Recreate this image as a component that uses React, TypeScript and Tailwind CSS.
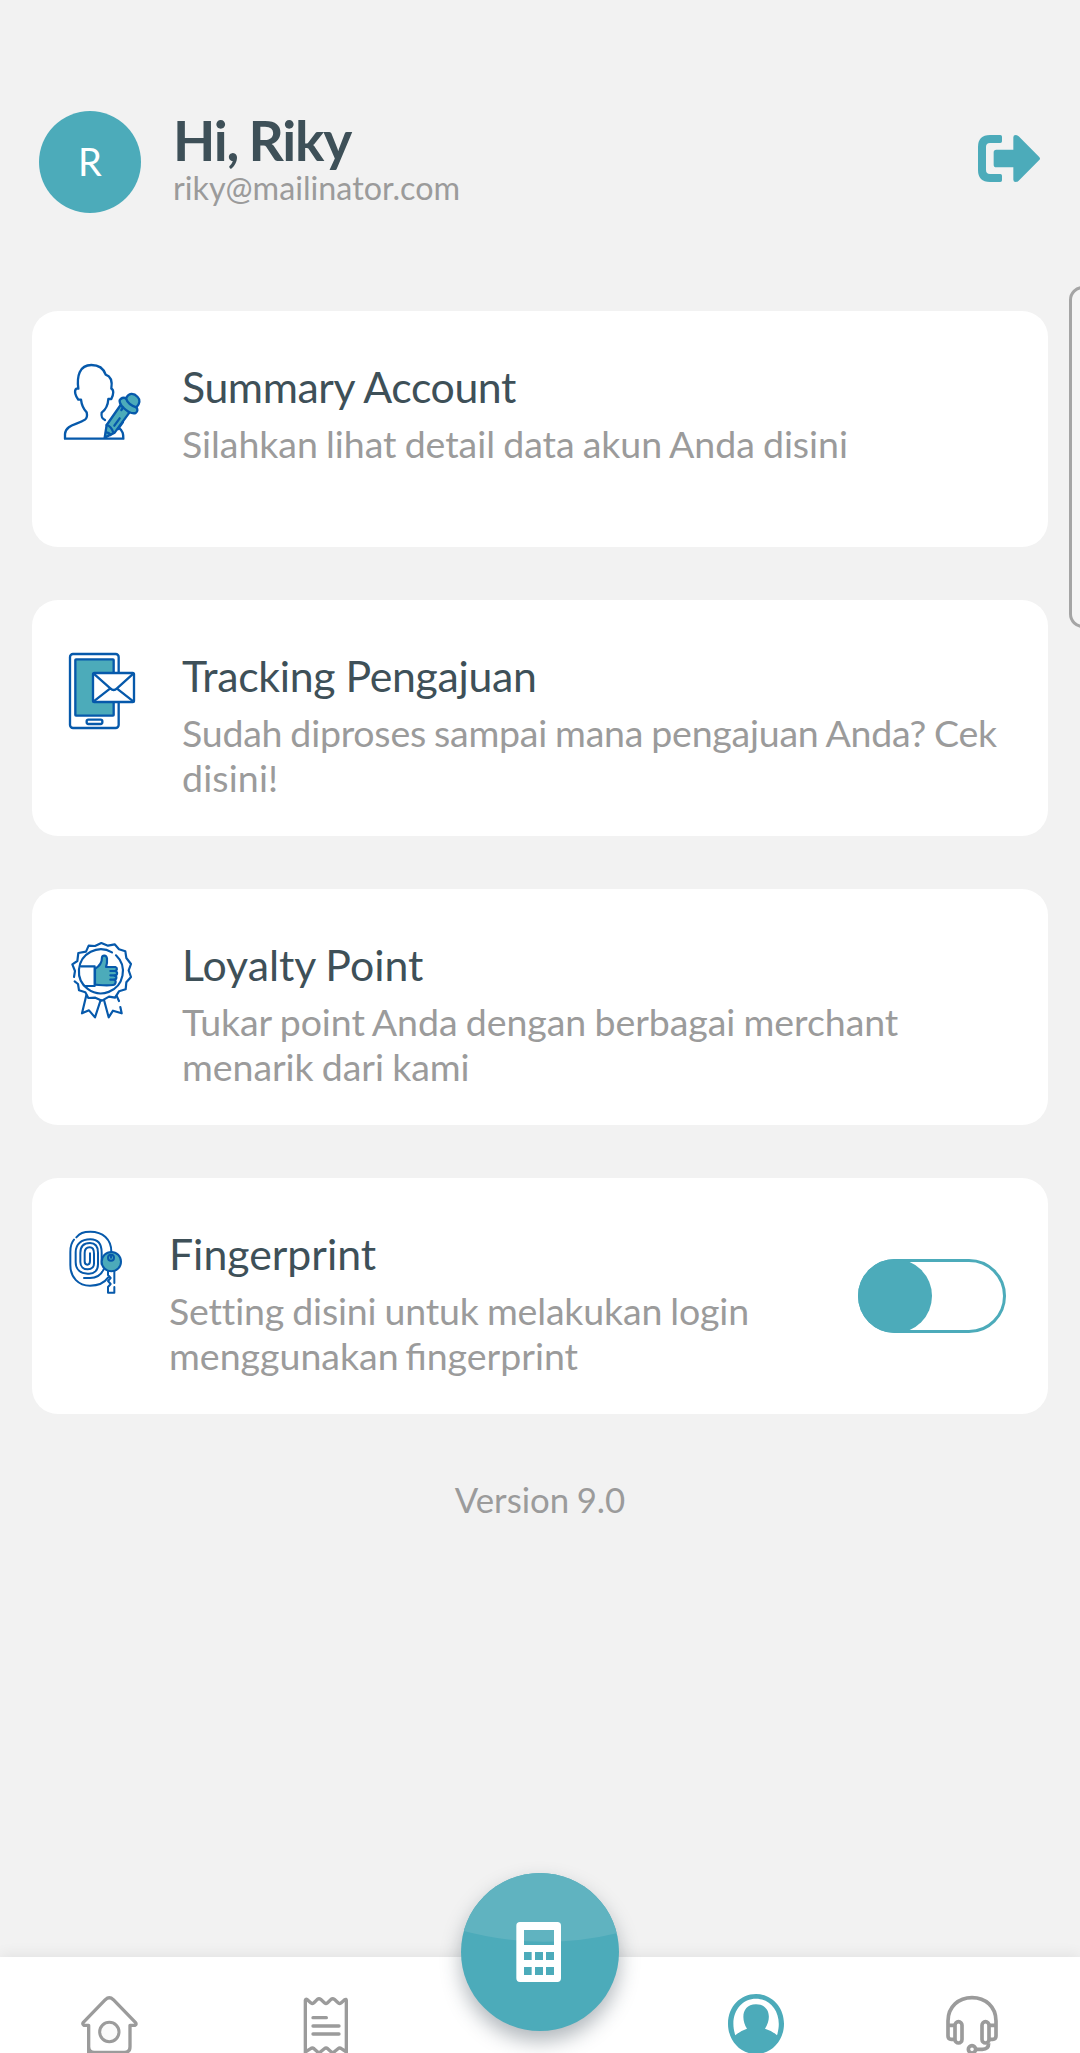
import type { ReactNode } from "react";

const NAVY = "#0659ab";
const TEAL = "#4cabba";
const GRAY = "#9b9b9b";

function AccountIcon() {
  return (
    <svg width="100" height="100" viewBox="0 3 300 300" fill="none" stroke={NAVY} strokeWidth="7" strokeLinejoin="round" strokeLinecap="round">
      <path d="M165 266H45V252C48 223 82 225 105 209C114 202 111 192 110 187C98 175 95 166 93 149H85C77 139 71 122 79 116H85C80 79 88 45 124 45C149 45 161 56 167 74C183 79 187 97 184 116C192 119 191 134 184 147H175C174 164 170 177 155 188C153 200 155 205 165 210M206 233C219 242 220 252 220 266H165" />
      <path fill={TEAL} d="M214 162L170 225L164 263L194 248L238 188Z" />
      <path fill={TEAL} d="M212 147C205 151 211 166 221 174C234 186 246 192 257 189C264 185 263 177 259 172C270 161 271 149 263 141C250 127 236 129 228 145C222 142 217 143 212 147Z" />
      <path d="M228 145C232 158 247 168 259 172M170 225C180 228 185 233 190 247M193 227L209 205M204 237L219 216M168 247C174 247 179 251 181 255M214 180L219 173" />
    </svg>
  );
}

function TrackingIcon() {
  return (
    <svg width="100" height="100" viewBox="0 0 300 300" fill="none" stroke={NAVY} strokeWidth="7" strokeLinejoin="round" strokeLinecap="round">
      <rect x="60" y="42" width="146" height="222" rx="9" />
      <rect x="76" y="58" width="115" height="169" rx="2" fill={TEAL} />
      <rect x="110" y="239" width="47" height="13" rx="5" />
      <rect x="129" y="99" width="123" height="87" rx="4" fill="#fff" />
      <path d="M131 101L181 145Q191 155 201 145L250 101M131 184L180 146M250 184L201 146" />
    </svg>
  );
}

function LoyaltyIcon() {
  return (
    <svg width="100" height="100" viewBox="0 -3 300 300" fill="none" stroke={NAVY} strokeWidth="6.500" strokeLinejoin="round" strokeLinecap="round">
      <path d="M72 141L75 123L67 103L82 93L85 69L108 65L116 47L135 48L154 39L174 47L194 43L207 58L226 64L229 84L243 102L236 121L243 141L229 157L227 178L207 184L195 203L177 200L156 212L136 203L115 204L106 187L87 181L84 162L74 154" />
      <path d="M186 67A66 66 0 1 0 198 76" />
      <path d="M93 109H134V168H105" />
      <path fill={TEAL} d="M135 116C153 107 156 95 156 82C157 75 169 74 171 85C172 96 171 103 168 111H196C203 113 202 122 195 123C204 125 203 135 194 137C202 139 200 149 193 149C200 153 197 165 189 165C167 168 151 165 135 164Z" />
      <path d="M181 123H195M181 136H194M181 149H193M109 196L96 250L117 241L135 262L152 210M162 210L176 262L189 242L215 250L211 231M200 198L207 213" />
    </svg>
  );
}

function FingerprintIcon() {
  return (
    <svg width="100" height="100" viewBox="0 9 300 300" fill="none" stroke={NAVY} strokeWidth="6" strokeLinejoin="round" strokeLinecap="round">
      <path d="M79 67C90 55 99 50 121 50C158 50 184 72 184 110M72 74C63 84 61 96 61 111V150C61 188 86 212 120 212C145 212 163 204 174 188" />
      <path d="M102 189H120C146 189 156 174 161 163M155 148V113C155 89 145 73 121 73C94 73 77 88 77 112V142C77 163 91 175 113 176C134 178 144 165 144 148V113C144 92 136 84 120 84C100 84 91 95 91 114V141C91 155 101 163 113 163C126 162 132 157 132 146V116C132 103 129 97 119 97C108 97 104 104 104 114V139C104 146 107 149 112 149C118 149 120 146 120 138V115" />
      <path d="M174 168V180L182 189L174 198L182 207L174 216V233H193V216M193 168V204" />
      <circle cx="184" cy="140" r="29" fill={TEAL} />
      <circle cx="183" cy="128" r="9" />
      <path d="M183 120V128" />
    </svg>
  );
}

function Toggle() {
  return (
    <div className="mt-[81px] mr-[42px] h-[74px] w-[148px] shrink-0 rounded-full border-[3px] border-[#4cabba]">
      <div className="-mt-[3px] -ml-[3px] size-[74px] rounded-full bg-[#4cabba]" />
    </div>
  );
}

type CardProps = {
  icon: ReactNode;
  title: string;
  titleClass?: string;
  lines: { text: string; className?: string }[];
  narrow?: boolean;
  action?: ReactNode;
};

function Card({ icon, title, titleClass = "", lines, narrow, action }: CardProps) {
  return (
    <section className="flex h-[236px] rounded-[26px] bg-white pl-[18px]">
      <div className="mt-10 size-[100px] shrink-0">{icon}</div>
      <div className={`grow whitespace-nowrap pt-[50px] ${narrow ? "pl-[19px]" : "pl-8"}`}>
        <h2 className={`text-[42.8px] leading-[52px] text-[#3e5058] ${titleClass}`}>{title}</h2>
        <p className="mt-[8px] text-[37.5px] leading-[45px] text-[#9b9b9b] [word-spacing:-1.3px]">
          {lines.map((l) => (
            <span key={l.text} className={`block ${l.className ?? ""}`}>{l.text}</span>
          ))}
        </p>
      </div>
      {action}
    </section>
  );
}

function LogoutIcon() {
  return (
    <svg className="ml-auto shrink-0" width="120" height="100" viewBox="0 0 360 300" fill={TEAL}>
      <path d="M90 75H121Q126 75 126 80V94Q126 99 121 99H90Q78 99 78 111V180Q78 192 90 192H121Q126 192 126 197V211Q126 216 121 216H90Q54 216 54 180V111Q54 75 90 75Z" />
      <path d="M109 119H160V82Q160 75 167 75Q172 75 176 79L237 140Q243 146 237 151L176 212Q172 216 167 216Q160 216 160 209V172H109Q101 172 101 164V127Q101 119 109 119Z" />
    </svg>
  );
}

function BottomNav() {
  return (
    <nav className="relative flex h-24 w-full shrink-0 bg-white pl-[60px] shadow-[0_-2px_14px_rgba(0,0,0,0.07)]">
      <svg className="shrink-0" width="100" height="96" viewBox="0 21 300 288" fill="none" stroke={GRAY} strokeWidth="10" strokeLinejoin="round" strokeLinecap="round">
        <path d="M86 330V226H72Q66 222 70 217L136 149Q148 138 160 149L226 217Q231 223 225 226H210V290Q210 307 193 307H103Q86 307 86 290V226" />
        <circle cx="148" cy="246" r="29" fill="#fafafa" strokeWidth="9" />
      </svg>
      <svg className="ml-[116px] shrink-0" width="100" height="96" viewBox="200 21 300 288" fill="none" stroke={GRAY} strokeWidth="10" strokeLinejoin="round" strokeLinecap="round">
        <path d="M288 320V151Q289 146 294 149L305 159Q309 162 313 159L324 148Q329 144 334 148L346 159Q350 162 354 159L365 148Q370 144 375 148L387 159Q391 162 395 159L406 149Q411 146 411 151V320M288 306L304 296Q309 292 314 296L325 306Q329 309 333 306L345 296Q350 292 355 296L366 306Q370 309 374 306L386 296Q391 292 396 296L411 306" />
        <path d="M311 203H351M311 228H389M311 252H389" />
      </svg>
      <svg className="ml-[324px] shrink-0" width="110" height="96" viewBox="0 21 330 288">
        <path fillRule="evenodd" fill={TEAL} d="M168 132C215 132 252 170 252 221C252 272 215 312 168 312C121 312 84 272 84 221C84 170 121 132 168 132ZM106 256Q122 242 141 236C122 207 126 163 168 163C211 163 215 207 195 236Q216 242 231 256C250 195 216 146 168 146C120 146 86 195 106 256Z" />
      </svg>
      <svg className="ml-[117px] shrink-0" width="100" height="96" viewBox="681 21 300 288" fill="none" stroke={GRAY} strokeWidth="11" strokeLinejoin="round">
        <path d="M744 226V213C744 170 776 143 816 143C856 143 888 170 888 213V258Q888 268 878 268H870M762 226H744V258Q744 268 754 268H762M870 226H888M866 280Q866 298 847 298H828" />
        <rect x="765" y="215" width="21" height="64" rx="10.500" />
        <rect x="846" y="215" width="21" height="64" rx="10.500" />
        <circle cx="816" cy="298" r="11" />
      </svg>
      <button aria-label="Calculator" className="absolute -top-[84px] left-[461px] size-[158px] rounded-full bg-[#4cabba] shadow-[0_10px_20px_rgba(40,55,70,0.36)]">
        <svg width="158" height="158" viewBox="63 69 474 474">
          <clipPath id="disc"><circle cx="300" cy="306" r="237" /></clipPath>
          <path clipPath="url(#disc)" fill="#60b3c0" d="M63 60H537V248Q300 306 63 241Z" />
          <path fill="#fff" fillRule="evenodd" d="M240 216H352Q363 216 363 227V385Q363 396 352 396H240Q229 396 229 385V227Q229 216 240 216ZM252 240V285H342V240ZM252 306V330H275V306ZM285 306V330H309V306ZM318 306V330H342V306ZM252 351V375H275V351ZM285 351V375H309V351ZM318 351V375H342V351Z" />
        </svg>
      </button>
    </nav>
  );
}

export default function App() {
  return (
    <div className="relative flex h-[2053px] w-[1080px] flex-col overflow-hidden bg-[#f2f2f2] font-[Lato,sans-serif]">
      <header className="flex h-[311px] shrink-0 pt-[110px] pl-[39px]">
        <div className="mt-px flex size-[102px] shrink-0 items-center justify-center rounded-full bg-[#4cabba] pb-[3px] text-[38px] leading-none text-white">R</div>
        <div className="whitespace-nowrap pl-8">
          <h1 className="-mt-px text-[55px] font-bold leading-[62px] tracking-[-1.2px] text-[#3e5058] [word-spacing:-2px]">Hi, Riky</h1>
          <p className="text-[32.3px] leading-[34px] text-[#9b9b9b]">riky@mailinator.com</p>
        </div>
        <LogoutIcon />
      </header>
      <main className="flex grow flex-col gap-[53px] px-8">
        <Card
          icon={<AccountIcon />}
          title="Summary Account"
          titleClass="tracking-[-0.4px]"
          lines={[{ text: "Silahkan lihat detail data akun Anda disini", className: "tracking-[-0.05px]" }]}
        />
        <Card
          icon={<TrackingIcon />}
          title="Tracking Pengajuan"
          titleClass="tracking-[-0.3px] [word-spacing:-0.5px]"
          lines={[{ text: "Sudah diproses sampai mana pengajuan Anda? Cek", className: "tracking-[-0.23px]" }, { text: "disini!", className: "tracking-[0.15px]" }]}
        />
        <Card
          icon={<LoyaltyIcon />}
          title="Loyalty Point"
          titleClass="[word-spacing:-1px]"
          lines={[{ text: "Tukar point Anda dengan berbagai merchant", className: "tracking-[-0.05px]" }, { text: "menarik dari kami", className: "tracking-[-0.05px]" }]}
        />
        <Card
          narrow
          icon={<FingerprintIcon />}
          title="Fingerprint"
          lines={[
            { text: "Setting disini untuk melakukan login", className: "tracking-[-0.16px]" },
            { text: "menggunakan fingerprint", className: "[word-spacing:-3px]" },
          ]}
          action={<Toggle />}
        />
        <p className="mt-[9px] text-center text-[34.8px] leading-[48px] text-[#9b9b9b] [word-spacing:-1.5px]">Version 9.0</p>
      </main>
      <BottomNav />
      <aside className="absolute top-[286px] left-[1069px] h-[342px] w-10 rounded-[14px] border-[3px] border-[#a5a5a5] bg-[#f5f5f5]" />
    </div>
  );
}
